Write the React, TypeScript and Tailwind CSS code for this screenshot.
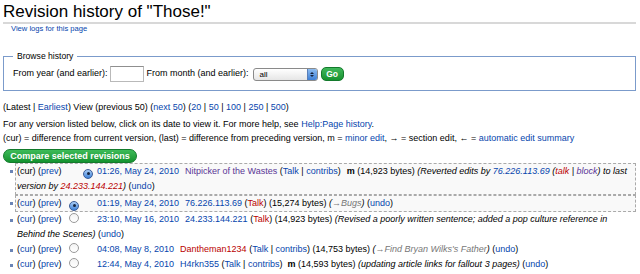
const link = "text-[#0645ad]";
const visited = "text-[#5a3696]";
const red = "text-[#ba0000]";
const gray = "text-[#777777]";

const Radio = ({ checked, hidden }: { checked?: boolean; hidden?: boolean }) => {
  if (hidden) return <span className="inline-block w-[10px] h-[10px] align-[-1px]" />;
  if (checked)
    return (
      <span className="inline-flex w-[10px] h-[10px] align-[-1px] items-center justify-center rounded-full border border-[#3a5c96] bg-gradient-to-b from-[#a9cdf5] to-[#3f82d8]">
        <span className="w-[3px] h-[3px] rounded-full bg-[#16253f]" />
      </span>
    );
  return (
    <span className="inline-block w-[10px] h-[10px] align-[-1px] rounded-full border border-[#9a9a9a] bg-gradient-to-b from-[#f4f4f4] to-white" />
  );
};

type Row = {
  first?: boolean;
  selected?: boolean;
  r1: "checked" | "plain" | "hidden";
  r2: "checked" | "hidden";
  date: string;
  body: React.ReactNode;
};

const rows: Row[] = [
  {
    first: true,
    selected: true,
    r1: "hidden",
    r2: "checked",
    date: "01:26, May 24, 2010",
    body: (
      <>
        <span className={`${visited} ml-[6px]`}>Nitpicker of the Wastes</span> (<span className={link}>Talk</span> |{" "}
        <span className={link}>contribs</span>)<b className="ml-[6px]">m</b> (14,923 bytes){" "}
        <i>
          (Reverted edits by <span className={link}>76.226.113.69</span> (<span className={red}>talk</span> |{" "}
          <span className={visited}>block</span>) to last
          <br />
          version by <span className={red}>24.233.144.221</span>)
        </i>{" "}
        (<span className={link}>undo</span>)
      </>
    ),
  },
  {
    selected: true,
    r1: "checked",
    r2: "hidden",
    date: "01:19, May 24, 2010",
    body: (
      <>
        <span className={`${link} ml-[6px]`}>76.226.113.69</span> (<span className={red}>Talk</span>) (15,274 bytes){" "}
        <i>
          (<span className={gray}>→Bugs</span>)
        </i>{" "}
        (<span className={link}>undo</span>)
      </>
    ),
  },
  {
    r1: "plain",
    r2: "hidden",
    date: "23:10, May 16, 2010",
    body: (
      <>
        <span className={`${link} ml-[6px]`}>24.233.144.221</span> (<span className={red}>Talk</span>) (14,923 bytes){" "}
        <i>
          (Revised a poorly written sentence; added a pop culture reference in
          <br />
          Behind the Scenes)
        </i>{" "}
        (<span className={link}>undo</span>)
      </>
    ),
  },
  {
    r1: "plain",
    r2: "hidden",
    date: "04:08, May 8, 2010",
    body: (
      <>
        <span className={`${red} ml-[6px]`}>Dantheman1234</span> (<span className={link}>Talk</span> |{" "}
        <span className={link}>contribs</span>) (14,753 bytes){" "}
        <i>
          (<span className={gray}>→Find Bryan Wilks's Father</span>)
        </i>{" "}
        (<span className={link}>undo</span>)
      </>
    ),
  },
  {
    r1: "plain",
    r2: "hidden",
    date: "12:44, May 4, 2010",
    body: (
      <>
        <span className={`${link} ml-[6px]`}>H4rkn355</span> (<span className={link}>Talk</span> |{" "}
        <span className={link}>contribs</span>)<b className="ml-[5px]">m</b> (14,593 bytes){" "}
        <i>(updating article links for fallout 3 pages)</i> (<span className={link}>undo</span>)
      </>
    ),
  },
];

const App = () => {
  return (
    <div className="w-[640px] h-[274px] overflow-hidden bg-white pl-[3px] pr-[4px] font-['Liberation_Sans',Arial,sans-serif] text-black text-[9px]">
      <h1 className="text-[17px] leading-[20px] pt-[2px] border-b-2 border-[#d8d8d8]">Revision history of "Those!"</h1>
      <div className={`pl-[8px] text-[7.6px] leading-[10px] ${link}`}>View logs for this page</div>

      <fieldset className="mt-[17px] border border-[#7b9bcb] px-[9px] pt-[4px] pb-[7px]">
        <legend className="px-[4px] text-[8.6px] leading-[10px]">Browse history</legend>
        <div className="flex items-center h-[18px] text-[9px]">
          <span>From year (and earlier):</span>
          <span className="ml-[2px] w-[34px] h-[16px] border border-[#b9b9b9] border-t-[#8f8f8f] bg-white" />
          <span className="ml-[3px]">From month (and earlier):</span>
          <span className="ml-[4px] flex w-[65px] h-[13px] rounded-[3px] border border-[#8a8a8a] overflow-hidden bg-gradient-to-b from-white to-[#e6e6e6]">
            <span className="flex-1 pl-[6px] text-[8px] leading-[11px]">all</span>
            <span className="w-[10px] flex flex-col items-center justify-center gap-[1px] bg-gradient-to-b from-[#8cbcf0] to-[#3d7fd6] border-l border-[#5a7fb8]">
              <span className="w-0 h-0 border-l-[2px] border-r-[2px] border-b-[2px] border-l-transparent border-r-transparent border-b-[#14213a]" />
              <span className="w-0 h-0 border-l-[2px] border-r-[2px] border-t-[2px] border-l-transparent border-r-transparent border-t-[#14213a]" />
            </span>
          </span>
          <span className="ml-[3px] w-[23px] h-[14px] rounded-[5px] border border-[#137a2c] bg-gradient-to-b from-[#3fb85a] to-[#15922f] text-white font-bold text-[8.5px] leading-[12px] text-center">
            Go
          </span>
        </div>
      </fieldset>

      <p className="mt-[9px] leading-[14px]">
        (Latest | <span className={link}>Earliest</span>) View (previous 50) (<span className={link}>next 50</span>) (
        <span className={link}>20</span> | <span className={link}>50</span> | <span className={link}>100</span> |{" "}
        <span className={link}>250</span> | <span className={link}>500</span>)
      </p>
      <p className="mt-[3px] leading-[14px]">
        For any version listed below, click on its date to view it. For more help, see{" "}
        <span className={link}>Help:Page history</span>.
      </p>
      <p className="leading-[14px]">
        (cur) = difference from current version, (last) = difference from preceding version, m ={" "}
        <span className={link}>minor edit</span>, → = section edit, ← = <span className={link}>automatic edit summary</span>
      </p>
      <div className="mt-[4px] w-[134px] h-[14px] rounded-[7px] border border-[#127a2b] bg-gradient-to-b from-[#3dbb59] to-[#13932f] text-white font-bold text-[9px] leading-[12px] text-center">
        Compare selected revisions
      </div>

      <ul className="leading-[15px]">
        {rows.map((r, i) => (
          <li key={i} className="flex">
            <span className="w-[12px] shrink-0 pt-[7px]">
              <span className="block ml-[7px] w-[3px] h-[3px] bg-[#6a84b6]" />
            </span>
            <div
              className={`flex-1 min-w-0 pl-[1px] whitespace-nowrap ${
                r.selected
                  ? "border border-dashed border-[#aaaaaa] bg-[#f9f9f9]"
                  : "border-x border-transparent"
              }`}
            >
              <span className="inline-block w-[52px]">
                (<span className={r.first ? "" : link}>cur</span>) (<span className={link}>prev</span>)
              </span>
              <Radio hidden={r.r1 === "hidden"} checked={r.r1 === "checked"} />
              <span className="inline-block w-[4px]" />
              <Radio hidden={r.r2 === "hidden"} checked={r.r2 === "checked"} />
              <span className={`${link} ml-[4px]`}>{r.date}</span>
              {r.body}
            </div>
          </li>
        ))}
      </ul>
    </div>
  );
};

export default App;
